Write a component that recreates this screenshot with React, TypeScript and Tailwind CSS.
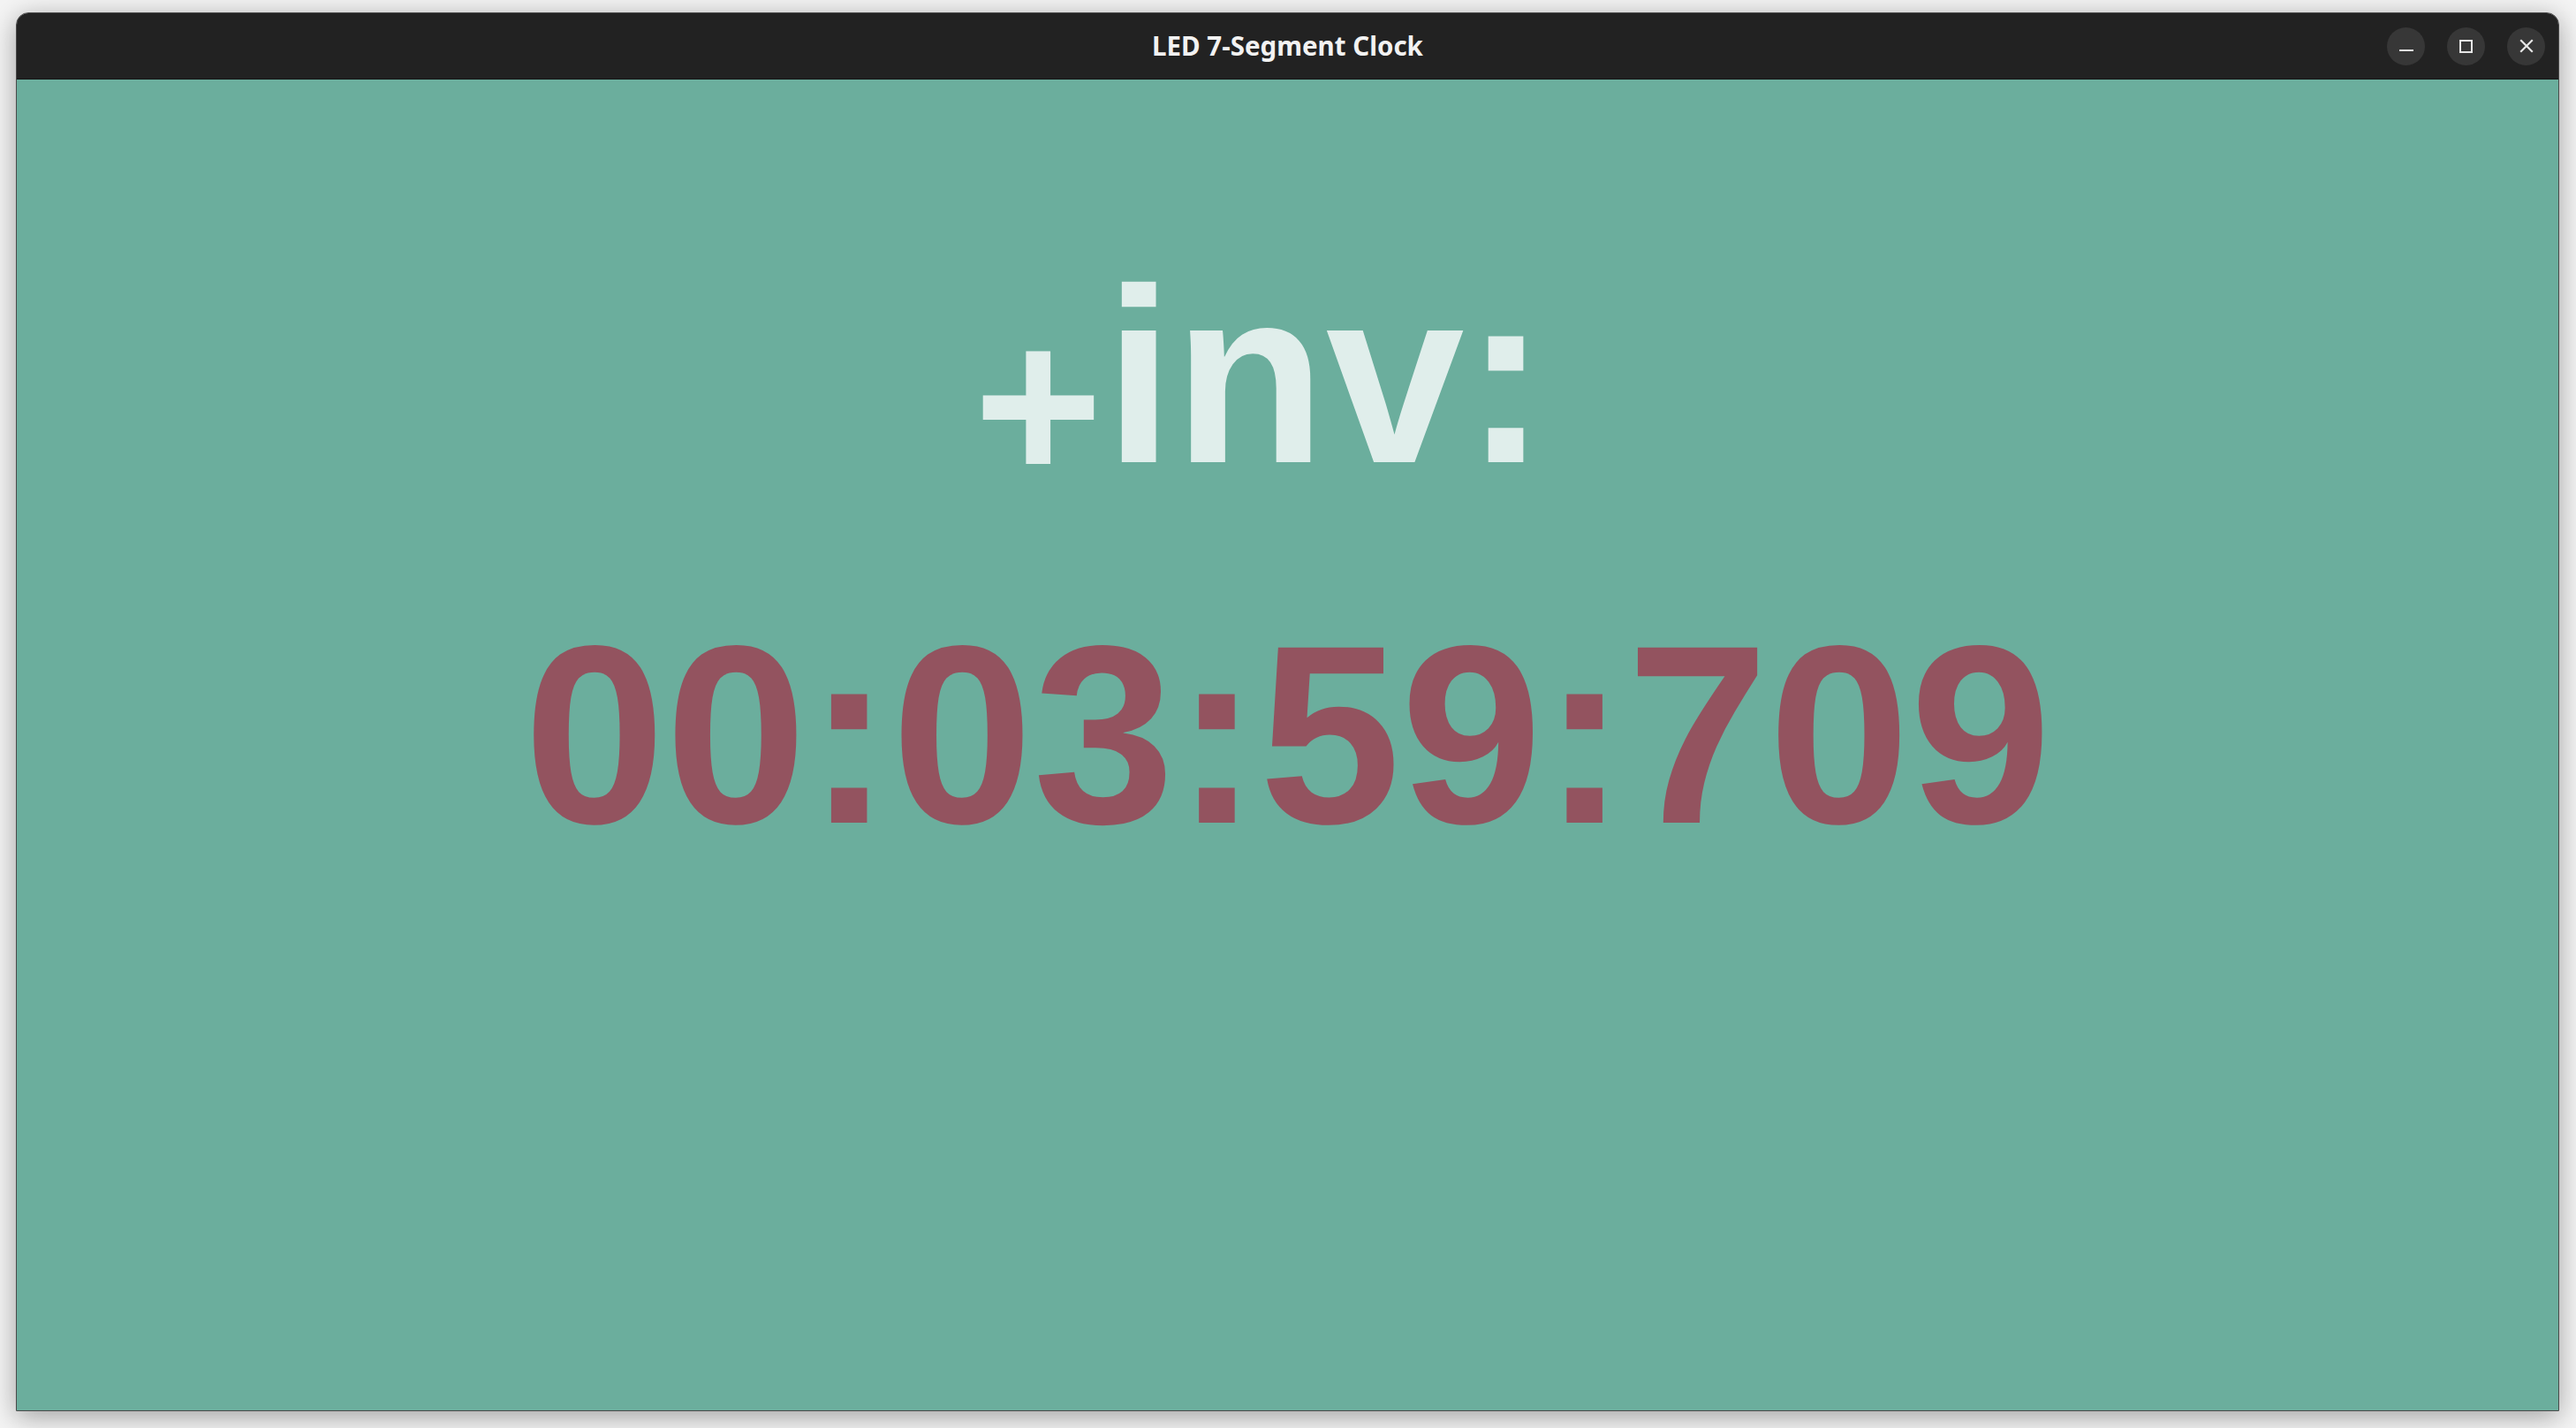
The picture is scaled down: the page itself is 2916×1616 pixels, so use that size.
import React from "react";

export default function App() {
  return (
    <div className="w-[2916px] h-[1616px] bg-[#f4f4f4] overflow-hidden">
      <div className="ml-[18px] mt-[14px] w-[2879px] h-[1583px] rounded-t-[14px] border border-[#4a4a4a] overflow-hidden flex flex-col shadow-[0_6px_30px_rgba(0,0,0,0.35)]">
        <div className="h-[75px] shrink-0 bg-[#222222] border-b border-[#161616] relative flex items-center justify-center">
          <span
            className="text-[29.5px] font-bold text-[#f2f2f2] leading-none"
            style={{ fontFamily: '"Noto Sans", "Open Sans", sans-serif' }}
          >
            LED 7-Segment Clock
          </span>
          <div className="absolute right-[15px] top-0 h-full flex items-center gap-[25px]">
            <div className="w-[43px] h-[43px] rounded-full bg-[#373737] flex items-center justify-center">
              <div className="w-[16px] h-[2px] bg-[#e6e6e6] mt-[9px]" />
            </div>
            <div className="w-[43px] h-[43px] rounded-full bg-[#373737] flex items-center justify-center">
              <div className="w-[15px] h-[15px] border-[2px] border-[#e6e6e6]" />
            </div>
            <div className="w-[43px] h-[43px] rounded-full bg-[#373737] flex items-center justify-center">
              <svg width="16" height="16" viewBox="0 0 16 16">
                <path d="M2 2 L14 14 M14 2 L2 14" stroke="#e6e6e6" strokeWidth="2.2" strokeLinecap="square" />
              </svg>
            </div>
          </div>
        </div>
        <div
          className="flex-1 bg-[#6bae9d] flex flex-col items-center pt-[195px] gap-[120px]"
          style={{ fontFamily: '"Liberation Sans", Arial, sans-serif' }}
        >
          <div className="text-[282px] leading-none font-bold text-[#e0eeeb] whitespace-pre flex items-baseline">
            <span className="inline-block w-[165px] pl-[17px] text-[250px] leading-none translate-y-[22px]">+</span>
            <span>{"inv: "}</span>
          </div>
          <div className="text-[288px] leading-none font-bold text-[#93535f] whitespace-pre">00:03:59:709</div>
        </div>
      </div>
    </div>
  );
}
